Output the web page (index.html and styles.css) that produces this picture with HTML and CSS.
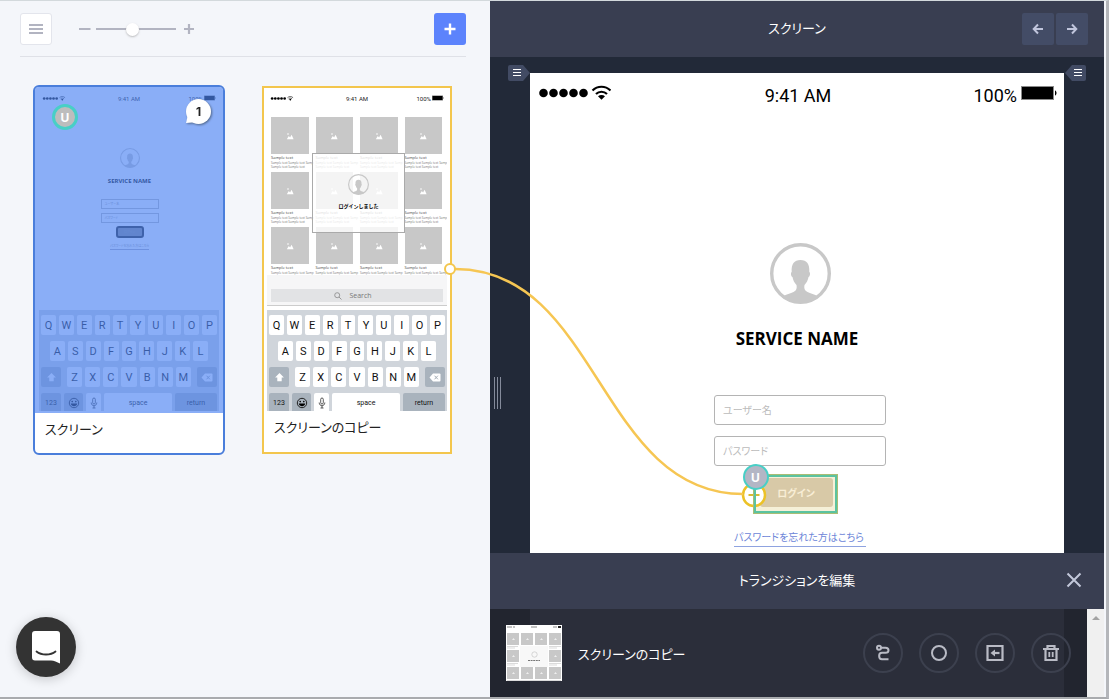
FILE: index.html
```html
<!DOCTYPE html>
<html lang="ja">
<head>
<meta charset="utf-8">
<title>スクリーン</title>
<link rel="stylesheet" href="styles.css">
</head>
<body>
<svg class="defs" width="0" height="0" aria-hidden="true">
  <symbol id="person" viewBox="0 0 61 61">
    <circle cx="30.500" cy="30.500" r="28.800" fill="none" stroke="#c8c8c8" stroke-width="3.400"/>
    <path fill="#c8c8c8" d="M12 54c4-3 12-4 14-7 1-2 .7-4 .5-5-2-2-3.500-5-4-8-1.700-.5-2-4.500-.8-5-.6-8 2.500-12 8.800-12s9.400 4 8.800 12c1.200.5.9 4.500-.8 5-.5 3-2 6-4 8-.2 1-.5 3 .5 5 2 3 10 4 14 7-5 4-12 5.500-18.500 5.500S17 58 12 54z"/>
  </symbol>
  <symbol id="picture" viewBox="0 0 10 10">
    <path fill="#fff" d="M1 9l2.500-4 1.600 2L7 3.500 9.500 9z"/><circle cx="2.500" cy="2.500" r="1" fill="#fff"/>
  </symbol>
  <symbol id="signal" viewBox="0 0 72 16">
    <circle cx="4.500" cy="8" r="4.300"/><circle cx="14.500" cy="8" r="4.300"/><circle cx="24.500" cy="8" r="4.300"/><circle cx="34.500" cy="8" r="4.300"/><circle cx="44.500" cy="8" r="4.300"/>
    <g fill="none" stroke="currentColor" stroke-width="2.200"><path d="M53.500 5.500c5-5 13-5 18 0M57 9c3-3 8-3 11 0"/></g>
    <path d="M59 11.200c2-1.700 5-1.700 7 0l-3.500 3.600z"/>
  </symbol>
  <symbol id="battery" viewBox="0 0 36 16">
    <rect x=".5" y="1.500" width="32" height="13" fill="#000" stroke="#8a8a8a"/><path d="M34 5.500c2 .5 2 4.500 0 5z"/>
  </symbol>
  <symbol id="shift" viewBox="0 0 10 10"><path fill="#fff" d="M5 1l4 4H7v3.500H3V5H1z"/></symbol>
  <symbol id="erase" viewBox="0 0 12 9"><path fill="#fff" d="M4 .5h6.500q1 0 1 1v6q0 1-1 1H4l-3.500-4z"/><path d="M5.500 2.700l3.400 3.600M8.900 2.700L5.500 6.300" stroke="#a5aeb7" stroke-width="1"/></symbol>
  <symbol id="smile" viewBox="0 0 12 12"><circle cx="6" cy="6" r="4.700" fill="none" stroke="#222" stroke-width="1"/><circle cx="4.200" cy="4.600" r=".8"/><circle cx="7.800" cy="4.600" r=".8"/><path d="M2.800 6.500h6.400c-.5 3.600-5.900 3.600-6.400 0z"/></symbol>
  <symbol id="mic" viewBox="0 0 8 12"><rect x="2.700" y="1" width="2.600" height="6" rx="1.300" fill="none" stroke="#333" stroke-width=".8"/><path d="M1.200 5.500c0 4.300 5.600 4.300 5.600 0M4 8.800V11M2.500 11h3" fill="none" stroke="#333" stroke-width=".8"/></symbol>
</svg>

<div class="app">
  <main class="board">
    <div class="toolbar">
      <button class="menu-button" aria-label="メニュー"><svg width="16" height="12" viewBox="0 0 16 12"><path d="M1 2h14M1 6h14M1 10h14" stroke="#b2b4c1" stroke-width="1.800"/></svg></button>
      <div class="zoom">
        <svg width="12" height="10" viewBox="0 0 12 10"><path d="M0 5h11.500" stroke="#b2b4c1" stroke-width="2"/></svg>
        <input class="zoom-range" type="range" min="0" max="100" value="45" aria-label="ズーム">
        <svg class="zoom-plus" width="10" height="10" viewBox="0 0 10 10"><path d="M0 5h10M5 0v10" stroke="#b2b4c1" stroke-width="2.200"/></svg>
      </div>
      <button class="add-button" aria-label="追加"><svg width="12" height="12" viewBox="0 0 12 12"><path d="M.5 6h11M6 .5v11" stroke="#fff" stroke-width="2.400"/></svg></button>
    </div>

    <div class="cards">
      <article class="card card-selected">
        <div class="shot">
          <div class="mini">
            <div class="mini-status"><svg width="24" height="5"><use href="#signal"/></svg><span>9:41 AM</span><span class="mini-power">100%<svg width="12" height="6"><use href="#battery"/></svg></span></div>
            <div class="mini-login">
              <svg width="20" height="20"><use href="#person"/></svg>
              <b class="mini-title">SERVICE NAME</b>
              <span class="mini-field">ユーザー名</span>
              <span class="mini-field">パスワード</span>
              <span class="mini-submit">ログイン</span>
              <span class="mini-link">パスワードを忘れた方はこちら</span>
            </div>
            <div class="keyboard">
              <div class="keys"><span>Q</span><span>W</span><span>E</span><span>R</span><span>T</span><span>Y</span><span>U</span><span>I</span><span>O</span><span>P</span></div>
              <div class="keys keys-home"><span>A</span><span>S</span><span>D</span><span>F</span><span>G</span><span>H</span><span>J</span><span>K</span><span>L</span></div>
              <div class="keys keys-low"><span class="dark"><svg width="11" height="11"><use href="#shift"/></svg></span><span>Z</span><span>X</span><span>C</span><span>V</span><span>B</span><span>N</span><span>M</span><span class="dark"><svg width="12" height="9"><use href="#erase"/></svg></span></div>
              <div class="keys keys-space"><span class="dark">123</span><span class="dark"><svg width="12" height="12"><use href="#smile"/></svg></span><span><svg width="8" height="12"><use href="#mic"/></svg></span><span>space</span><span class="dark">return</span></div>
            </div>
          </div>
          <span class="user user-card">U</span>
          <span class="bubble">1</span>
        </div>
        <h2 class="card-name">スクリーン</h2>
      </article>

      <article class="card card-linked">
        <div class="shot">
          <div class="mini">
            <div class="mini-status"><svg width="24" height="5"><use href="#signal"/></svg><span>9:41 AM</span><span class="mini-power">100%<svg width="12" height="6"><use href="#battery"/></svg></span></div>
            <div class="catalog">
              <div class="item"><i><svg><use href="#picture"/></svg></i><b>Sample text</b><p>Sample text Sample text Samp<br>Sample text Sample text</p></div>
              <div class="item"><i><svg><use href="#picture"/></svg></i><b>Sample text</b><p>Sample text Sample text Samp<br>Sample text Sample text</p></div>
              <div class="item"><i><svg><use href="#picture"/></svg></i><b>Sample text</b><p>Sample text Sample text Samp<br>Sample text Sample text</p></div>
              <div class="item"><i><svg><use href="#picture"/></svg></i><b>Sample text</b><p>Sample text Sample text Samp<br>Sample text Sample text</p></div>
              <div class="item"><i><svg><use href="#picture"/></svg></i><b>Sample text</b><p>Sample text Sample text Samp<br>Sample text Sample text</p></div>
              <div class="item"><i><svg><use href="#picture"/></svg></i><b>Sample text</b><p>Sample text Sample text Samp<br>Sample text Sample text</p></div>
              <div class="item"><i><svg><use href="#picture"/></svg></i><b>Sample text</b><p>Sample text Sample text Samp<br>Sample text Sample text</p></div>
              <div class="item"><i><svg><use href="#picture"/></svg></i><b>Sample text</b><p>Sample text Sample text Samp<br>Sample text Sample text</p></div>
              <div class="item"><i><svg><use href="#picture"/></svg></i><b>Sample text</b><p>Sample text Sample text Samp</p></div>
              <div class="item"><i><svg><use href="#picture"/></svg></i><b>Sample text</b><p>Sample text Sample text Samp</p></div>
              <div class="item"><i><svg><use href="#picture"/></svg></i><b>Sample text</b><p>Sample text Sample text Samp</p></div>
              <div class="item"><i><svg><use href="#picture"/></svg></i><b>Sample text</b><p>Sample text Sample text Samp</p></div>
              <div class="notice"><svg width="21" height="21"><use href="#person"/></svg><strong>ログインしました</strong></div>
            </div>
            <div class="search-band"><span class="search-bar"><svg width="8" height="8" viewBox="0 0 8 8"><circle cx="3.200" cy="3.200" r="2.500" fill="none" stroke="#888" stroke-width=".8"/><path d="M5 5l2.500 2.500" stroke="#888" stroke-width=".8"/></svg>Search</span></div>
            <div class="keyboard">
              <div class="keys"><span>Q</span><span>W</span><span>E</span><span>R</span><span>T</span><span>Y</span><span>U</span><span>I</span><span>O</span><span>P</span></div>
              <div class="keys keys-home"><span>A</span><span>S</span><span>D</span><span>F</span><span>G</span><span>H</span><span>J</span><span>K</span><span>L</span></div>
              <div class="keys keys-low"><span class="dark"><svg width="11" height="11"><use href="#shift"/></svg></span><span>Z</span><span>X</span><span>C</span><span>V</span><span>B</span><span>N</span><span>M</span><span class="dark"><svg width="12" height="9"><use href="#erase"/></svg></span></div>
              <div class="keys keys-space"><span class="dark">123</span><span class="dark"><svg width="12" height="12"><use href="#smile"/></svg></span><span><svg width="8" height="12"><use href="#mic"/></svg></span><span>space</span><span class="dark">return</span></div>
            </div>
          </div>
        </div>
        <h2 class="card-name">スクリーンのコピー</h2>
      </article>
    </div>
  </main>

  <section class="editor">
    <header class="bar">
      <h1 class="bar-title">スクリーン</h1>
      <div class="pager">
        <button aria-label="前へ"><svg width="12" height="12" viewBox="0 0 12 12"><path d="M11 6H2M6 1.500L1.700 6 6 10.500" fill="none" stroke="#c0c5dc" stroke-width="2"/></svg></button>
        <button aria-label="次へ"><svg width="12" height="12" viewBox="0 0 12 12"><path d="M1 6h9M6 1.500L10.300 6 6 10.500" fill="none" stroke="#c0c5dc" stroke-width="2"/></svg></button>
      </div>
    </header>

    <div class="stage">
      <button class="tag tag-left" aria-label="左メニュー"><svg width="22" height="16" viewBox="0 0 22 16"><path fill="#424b64" d="M2 0h13l7 8-7 8H2q-2 0-2-2V2q0-2 2-2z"/><path d="M5 4.500h8M5 7.500h8M5 10.500h8" stroke="#fff"/></svg></button>
      <div class="phone">
        <div class="status"><svg width="72" height="16"><use href="#signal"/></svg><span>9:41 AM</span><span class="power">100%<svg width="36" height="16"><use href="#battery"/></svg></span></div>
        <form class="login">
          <svg width="61" height="61"><use href="#person"/></svg>
          <h2>SERVICE NAME</h2>
          <input type="text" placeholder="ユーザー名" aria-label="ユーザー名">
          <input type="password" placeholder="パスワード" aria-label="パスワード">
          <div class="hotspot">
            <button type="button">ログイン</button>
            <svg class="port" width="26" height="26" viewBox="0 0 26 26"><circle cx="13" cy="13" r="11" fill="#fff" stroke="#ecc227" stroke-width="2.500"/><path d="M7.500 13h11M13 7.500v11" stroke="#d8bb32" stroke-width="2"/></svg>
            <span class="frame"></span>
            <span class="user user-spot">U</span>
          </div>
          <a href="#">パスワードを忘れた方はこちら</a>
        </form>
      </div>
      <button class="tag" aria-label="右メニュー"><svg width="22" height="16" viewBox="0 0 22 16"><path fill="#424b64" d="M20 0H8L1 8l7 8h12q2 0 2-2V2q0-2-2-2z"/><path d="M10 4.500h8M10 7.500h8M10 10.500h8" stroke="#fff"/></svg></button>
      <span class="grip"></span>
    </div>

    <div class="transition">
      <header class="bar">
        <h2 class="bar-title">トランジションを編集</h2>
        <button class="close" aria-label="閉じる"><svg width="16" height="16" viewBox="0 0 16 16"><path d="M1.500 1.500l13 13M14.500 1.500l-13 13" stroke="#c3c8da" stroke-width="2"/></svg></button>
      </header>
      <div class="transition-body">
        <div class="target">
          <svg width="56" height="56" viewBox="0 0 56 56">
            <rect width="56" height="56" fill="#fff"/>
            <path d="M1 2h5M7 2h2M25 2h6M47 2h4" stroke="#888"/><path d="M52 2h3" stroke="#222" stroke-width="2"/>
            <path fill="#c8c8c8" d="M1 8h12v12H1zM15 8h12v12H15zM29 8h12v12H29zM43 8h12v12H43zM1 25h12v12H1zM43 25h12v12H43zM1 42h12v12H1zM15 42h12v12H15zM29 42h12v12H29zM43 42h12v12H43z"/>
            <path fill="#fff" fill-opacity=".7" d="M6 15l1.500-2L9 15zM20 15l1.500-2 1.500 2zM34 15l1.500-2 1.500 2zM48 15l1.500-2 1.500 2zM6 32l1.500-2L9 32zM48 32l1.500-2 1.500 2zM6 49l1.500-2L9 49zM20 49l1.500-2 1.500 2zM34 49l1.500-2 1.500 2zM48 49l1.500-2 1.500 2z"/>
            <path d="M1 21.500h11M1 23h8M15 21.500h8M29 21.500h8M43 21.500h12M43 23h8M1 38.500h11M1 40h8M43 38.500h12M43 40h8M1 55.500h54" stroke="#ccc" stroke-width=".7"/>
            <rect x="14" y="21" width="28" height="21" fill="#f8f8f8"/><circle cx="28.500" cy="29.500" r="2.700" fill="none" stroke="#ccc" stroke-width=".8"/><path d="M22 35.500h12" stroke="#777" stroke-dasharray="2 .6"/>
          </svg>
          <span class="target-name">スクリーンのコピー</span>
          <div class="actions">
            <button aria-label="パス"><svg width="18" height="18" viewBox="0 0 18 18" fill="none" stroke="#b9bbc5" stroke-width="2"><circle cx="5" cy="3.800" r="2"/><path d="M7 3.800h4.500c4 0 4 5 0 5H8c-3.800 0-3.800 6.400 0 6.400h6.500"/></svg></button>
            <button aria-label="円"><svg width="18" height="18" viewBox="0 0 18 18" fill="none" stroke="#b9bbc5" stroke-width="2"><circle cx="9" cy="9" r="7"/></svg></button>
            <button aria-label="戻る"><svg width="18" height="18" viewBox="0 0 18 18" fill="none" stroke="#b9bbc5" stroke-width="2.200"><path d="M1.500 2h15v14h-15z"/><path d="M13.500 9H7"/><path fill="#b9bbc5" stroke="none" d="M4.500 9l4.500-3.600v7.200z"/></svg></button>
            <button aria-label="削除"><svg width="18" height="18" viewBox="0 0 18 18" fill="none" stroke="#b9bbc5" stroke-width="2.200"><path d="M1 5h16M5.500 4.500V2h7v2.500M3.500 5v11h11V5"/><path d="M7.300 8v5M10.700 8v5" stroke-width="1.800"/></svg></button>
          </div>
        </div>
        <div class="scroll"><svg width="8" height="4" viewBox="0 0 8 4"><path fill="#a3a3a3" d="M0 4l4-4 4 4z"/></svg></div>
      </div>
    </div>
  </section>
</div>

<svg class="wire" width="320" height="240" viewBox="0 0 320 240"><path d="M15 9C159 9 159 234 303 234" fill="none" stroke="#f6c653" stroke-width="2.500"/><circle cx="10" cy="9" r="5" fill="#fff" stroke="#f3c64d" stroke-width="2"/></svg>

<button class="chat" aria-label="チャット"><svg width="28" height="33" viewBox="0 0 28 33"><path fill="#fff" d="M3 0h22q3 0 3 3v29.500c-3-1.500-6-3-9-3H3q-3 0-3-3V3q0-3 3-3z"/><path d="M4.500 20.500c5 4 14 4 19 0" fill="none" stroke="#333" stroke-width="1.800" stroke-linecap="round"/></svg></button>
</body>
</html>
```
FILE: styles.css
```css
* { box-sizing: border-box; }

body {
  margin: 0;
  min-height: 100vh;
  display: flex;
  border-top: 1px solid #d3d9dc;
  border-right: 3px solid #b4b6ba;
  border-bottom: 2px solid #a9abae;
  background: #f4f6fa;
  color: #222;
  font-family: Roboto, "Noto Sans CJK JP", sans-serif;
  font-feature-settings: "palt";
  font-size: 13px;
}

button { border: 0; padding: 0; background: none; font: inherit; color: inherit; cursor: pointer; }
h1, h2, p { margin: 0; font-weight: 400; font-size: 13px; }
svg { display: block; flex: none; }
.defs { position: absolute; }

.app {
  flex: 1;
  display: grid;
  grid-template-columns: 490fr 614fr;
  padding-right: 2px;
}

/* Board */
.toolbar {
  display: flex;
  align-items: center;
  margin: 0 24px 0 20px;
  padding: 12px 0 11px;
  border-bottom: 1px solid #dfe1e7;
}
.menu-button, .add-button {
  width: 32px;
  height: 32px;
  display: grid;
  place-items: center;
  border-radius: 3px;
}
.menu-button { background: #fff; border: 1px solid #e3e5ec; }
.add-button { background: #5c83fc; margin-left: auto; }
.zoom { display: flex; align-items: center; gap: 5px; margin-left: 27px; }
.zoom-plus { margin-left: 3px; }
.zoom-range {
  appearance: none;
  width: 80px;
  height: 14px;
  margin: 0;
  background: linear-gradient(#b2b4c1, #b2b4c1) center / 100% 2px no-repeat;
}
.zoom-range::-webkit-slider-thumb {
  appearance: none;
  width: 13px;
  height: 13px;
  border-radius: 50%;
  background: #fff;
  box-shadow: 0 1px 2px #8888;
}

.cards { display: flex; align-items: center; gap: 37px; padding: 28px 33px; }
.card { background: #fff; }
.card-selected { width: 192px; border: 2px solid #4a7edb; border-radius: 6px; }
.card-linked { width: 190px; border: 2px solid #f3c64d; }
.shot { position: relative; padding: 0 3px; }
.card-selected .shot { padding: 1px 4px 2px; }
.card-selected .shot::after {
  content: "";
  position: absolute;
  inset: 0;
  border-radius: 4px 4px 0 0;
  background: rgba(78, 132, 243, .66);
}
.card-name { padding: 6px 10px 12px; line-height: 22px; }
.card-linked .card-name { padding-bottom: 13px; }

.mini { display: flex; flex-direction: column; height: 323px; overflow: hidden; }
.mini-status {
  height: 20px;
  padding: 0 3px;
  display: grid;
  grid-template-columns: 1fr auto 1fr;
  align-items: center;
  font-size: 6px;
}
.mini-power { display: flex; justify-content: flex-end; align-items: center; gap: 1px; }
.mini-login { display: flex; flex-direction: column; align-items: center; padding: 40px 0 0 1px; font-size: 3px; color: #999; }
.mini-title { margin: 9px 0 14px; font: bold 6px/8px "Open Sans", sans-serif; color: #000; }
.mini-field { width: 58px; height: 10px; margin-bottom: 4px; padding: 0 3px; border: 1px solid #bbb; line-height: 8px; }
.mini-submit { width: 28px; height: 12px; margin-top: -1px; border: 2px solid #222; border-radius: 3px; background: #888; text-align: center; line-height: 8px; }
.mini-link { margin-top: 5px; line-height: 6px; border-bottom: 1px solid #aab; }

.keyboard {
  flex: none;
  height: 101px;
  margin-top: auto;
  padding: 5px 2px 0;
  background: #d0d5db;
  display: flex;
  flex-direction: column;
  gap: 6px;
  font-size: 11px;
  color: #111;
}
.keys { display: grid; grid-template-columns: repeat(10, 1fr); gap: 3px; }
.keys-home { grid-template-columns: repeat(9, 1fr); padding: 0 9px; }
.keys-low { grid-template-columns: 23px repeat(7, 1fr) 23px; }
.keys-space { grid-template-columns: 20px 19px 15px 1fr 42px; font-size: 7px; }
.keys span { height: 20px; display: grid; place-items: center; border-radius: 2px; background: #fff; }
.keys .dark { background: #a9b3bd; }
.keys-low .dark:first-child { margin-right: 3px; }
.keys-low .dark:last-child { margin-left: 3px; }

.catalog {
  position: relative;
  height: 167px;
  overflow: hidden;
  padding: 9px 5px 0 4px;
  display: grid;
  grid-template-columns: repeat(4, 1fr);
  grid-auto-rows: 51px;
  gap: 4px 7px;
  font-family: "Open Sans", sans-serif;
  color: #444;
}
.item { min-width: 0; white-space: nowrap; }
.item i { height: 37px; display: grid; place-items: center; background: #c8c8c8; }
.item i svg { width: 8px; height: 8px; }
.item b { display: block; font-weight: 400; font-size: 4px; line-height: 6px; padding-top: 1px; }
.item p { font-size: 3px; line-height: 4px; color: #777; }
.notice {
  position: absolute;
  left: 45px;
  right: 42px;
  top: 45px;
  height: 80px;
  padding-top: 20px;
  display: flex;
  flex-direction: column;
  align-items: center;
  gap: 7px;
  border: 1px solid #aaa;
  background: rgba(255, 255, 255, .8);
  font: 5px/8px "Noto Sans CJK JP", sans-serif;
  color: #000;
}
.search-band { padding: 14px 4px 3px; background: #f6f6f7; border-bottom: 1px solid #ccc; }
.search-bar {
  height: 13px;
  display: flex;
  align-items: center;
  justify-content: center;
  gap: 7px;
  padding-right: 8px;
  background: #e2e3e5;
  font: 7px "Open Sans", sans-serif;
  color: #777;
}

.user {
  position: absolute;
  width: 26px;
  height: 26px;
  display: grid;
  place-items: center;
  border-radius: 50%;
  border: 3px solid #48cfc6;
  background: #bdbdbd;
  color: #fff;
  font: bold 12px Inter, sans-serif;
}
.user-card { z-index: 1; left: 17px; top: 17px; }
.bubble {
  position: absolute;
  z-index: 1;
  right: 12px;
  top: 12px;
  width: 25px;
  height: 25px;
  display: grid;
  place-items: center;
  border-radius: 50%;
  background: #fff;
  filter: drop-shadow(1px 1px 1px #345a);
  font: bold 12px Inter, sans-serif;
}
.bubble::before {
  content: "";
  position: absolute;
  left: 0;
  bottom: 1px;
  width: 12px;
  height: 10px;
  background: #fff;
  clip-path: polygon(20% 0, 0 100%, 100% 90%);
}

/* Editor */
.editor { display: flex; flex-direction: column; min-width: 0; background: #222938; color: #fff; }
.bar {
  height: 56px;
  padding: 0 16px;
  display: grid;
  grid-template-columns: 1fr auto 1fr;
  align-items: center;
  background: #393e51;
}
.bar-title { grid-column: 2; padding-bottom: 4px; }
.pager { display: flex; justify-content: flex-end; gap: 2px; }
.pager button { width: 32px; height: 32px; display: grid; place-items: center; border-radius: 2px; background: #434c66; }
.close { justify-self: end; padding: 6px 6px 8px; }

.stage {
  position: relative;
  flex: 1 1 0;
  min-height: 0;
  overflow: hidden;
  display: grid;
  grid-template-columns: 40px 1fr 40px;
  align-items: start;
}
.tag { margin-top: 8px; width: 22px; }
.tag-left { margin-left: 18px; }
.grip {
  position: absolute;
  left: 4px;
  top: 320px;
  width: 7px;
  height: 32px;
  background: repeating-linear-gradient(90deg, #858b9b 0 1px, #222938 1px 3px);
}

.phone { margin-top: 16px; min-height: 600px; background: #fff; color: #000; }
.status {
  height: 44px;
  padding: 0 7px 0 9px;
  display: grid;
  grid-template-columns: 1fr auto 1fr;
  align-items: center;
  font-size: 18px;
}
.status > svg { margin-bottom: 4px; }
.power { display: flex; justify-content: flex-end; align-items: center; gap: 4px; }
.power svg { margin-bottom: 4px; }

.login { display: flex; flex-direction: column; align-items: center; padding: 126px 0 40px 6px; }
.login h2 { margin: 23px 6px 44px 0; font: bold 17px/24px "Open Sans", sans-serif; }
.login input {
  width: 172px;
  height: 30px;
  margin-bottom: 11px;
  padding: 0 8px;
  border: 1px solid #b4b4b4;
  border-radius: 3px;
  font: 10px Roboto, "Noto Sans CJK JP", sans-serif;
  font-feature-settings: inherit;
}
.login input::placeholder { color: #bbb; }
.hotspot { position: relative; margin: -3px 10px 0 0; padding: 4px 5px 7px 7px; background: #f5f0d8; }
.hotspot button { width: 73px; height: 29px; border-radius: 3px; background: #d8c9a7; color: #f8eed6; font-size: 10px; font-weight: 700; display: block; }
.port { position: absolute; left: -12px; top: 8px; }
.frame { position: absolute; inset: 0; border: 3px solid #5bc3a0; outline: 1px solid #a9bd74; outline-offset: -1px; }
.user-spot { left: -10px; top: -10px; border-width: 2px; background: #b3b6c5; }
.login a { margin-top: 15px; padding-right: 2px; border-bottom: 1px solid #8fa3e0; color: #6c85d8; font-size: 10px; line-height: 17px; text-decoration: none; }

.transition-body {
  display: flex;
  background: linear-gradient(90deg, #22252f 40px, #2b2e3a 40px calc(100% - 40px), #22252f calc(100% - 40px));
}
.target { flex: 1; display: flex; align-items: center; gap: 16px; padding: 16px; }
.actions { display: flex; gap: 16px; margin-left: auto; }
.actions button { width: 40px; height: 40px; display: grid; place-items: center; border: 2px solid #3c404e; border-radius: 50%; }
.scroll { width: 17px; padding-top: 7px; display: flex; justify-content: center; background: #f0f0f0; }

.wire { position: absolute; left: 440px; top: 260px; pointer-events: none; }
.chat {
  position: fixed;
  left: 16px;
  bottom: 22px;
  width: 60px;
  height: 60px;
  display: grid;
  place-items: center;
  border-radius: 50%;
  background: #333;
  box-shadow: 0 2px 12px #0003;
}
```
